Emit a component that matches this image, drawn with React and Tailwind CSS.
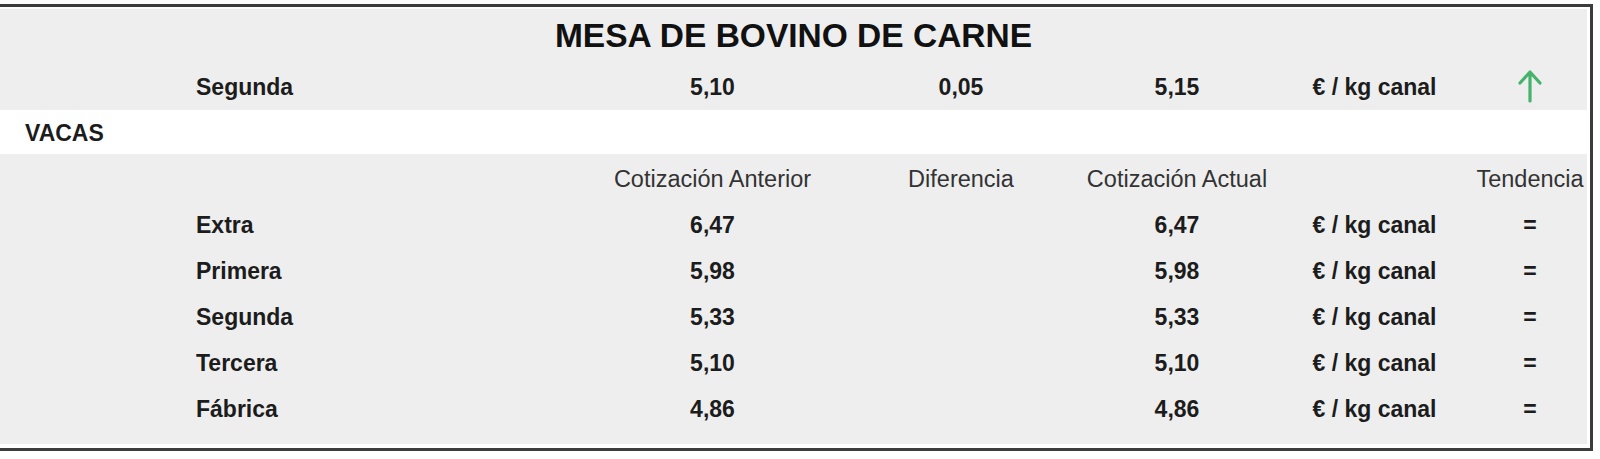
const rows = [
  { name: 'Extra', prev: '6,47', diff: '', curr: '6,47' },
  { name: 'Primera', prev: '5,98', diff: '', curr: '5,98' },
  { name: 'Segunda', prev: '5,33', diff: '', curr: '5,33' },
  { name: 'Tercera', prev: '5,10', diff: '', curr: '5,10' },
  { name: 'Fábrica', prev: '4,86', diff: '', curr: '4,86' },
]

const grid = 'grid grid-cols-[588px_249px_248px_184px_211px_100px] items-center'

function Cell({ children, className = '' }) {
  return <div className={`flex justify-center whitespace-nowrap ${className}`}>{children}</div>
}

function ArrowUp() {
  return (
    <svg width="26" height="34" viewBox="0 0 26 34" fill="none">
      <path d="M13 32V4M3 14L13 3L23 14" stroke="#45b36b" strokeWidth="3.2" strokeLinecap="round" strokeLinejoin="round" />
    </svg>
  )
}

function PriceRow({ name, prev, diff, curr, trend }) {
  return (
    <div className={`${grid} h-[46px] font-bold text-[#1c1c1c]`}>
      <div className="pl-[196px] whitespace-nowrap">{name}</div>
      <Cell>{prev}</Cell>
      <Cell>{diff}</Cell>
      <Cell>{curr}</Cell>
      <Cell>€ / kg canal</Cell>
      <Cell>{trend}</Cell>
    </div>
  )
}

export default function App() {
  return (
    <div className="w-[1600px] h-[459px] bg-white pt-[4px] overflow-hidden" style={{ fontFamily: '"Liberation Sans", Arial, sans-serif' }}>
      <div className="w-[1593px] border-t-[3px] border-r-[3px] border-b-[3px] border-[#3d3d3d] bg-white pt-[2px] pr-[3px] pb-[4px]">
        <div className="bg-[#eeeeee] text-[23px] leading-none overflow-hidden">
          {/* Title */}
          <div className="h-[53px] flex items-center justify-center">
            <h1 className="text-[33.5px] font-bold text-[#111] pt-[1px]">MESA DE BOVINO DE CARNE</h1>
          </div>

          {/* Previous category row */}
          <div className={`${grid} h-[48px] font-bold text-[#1c1c1c]`}>
            <div className="pl-[196px] pt-[2px]">Segunda</div>
            <Cell className="pt-[2px]">5,10</Cell>
            <Cell className="pt-[2px]">0,05</Cell>
            <Cell className="pt-[2px]">5,15</Cell>
            <Cell className="pt-[2px]">€ / kg canal</Cell>
            <Cell><ArrowUp /></Cell>
          </div>

          {/* Section */}
          <div className="h-[44px] bg-white flex items-center pl-[25px] pt-[2px] font-bold text-[#1c1c1c]">VACAS</div>

          {/* Header */}
          <div className={`${grid} h-[48px] pt-[3px] text-[#333] text-[23.5px]`}>
            <div />
            <Cell>Cotización Anterior</Cell>
            <Cell>Diferencia</Cell>
            <Cell>Cotización Actual</Cell>
            <Cell></Cell>
            <Cell>Tendencia</Cell>
          </div>

          {rows.map((r) => (
            <PriceRow key={r.name} {...r} trend="=" />
          ))}
          <div className="h-[12px]" />
        </div>
      </div>
    </div>
  )
}
